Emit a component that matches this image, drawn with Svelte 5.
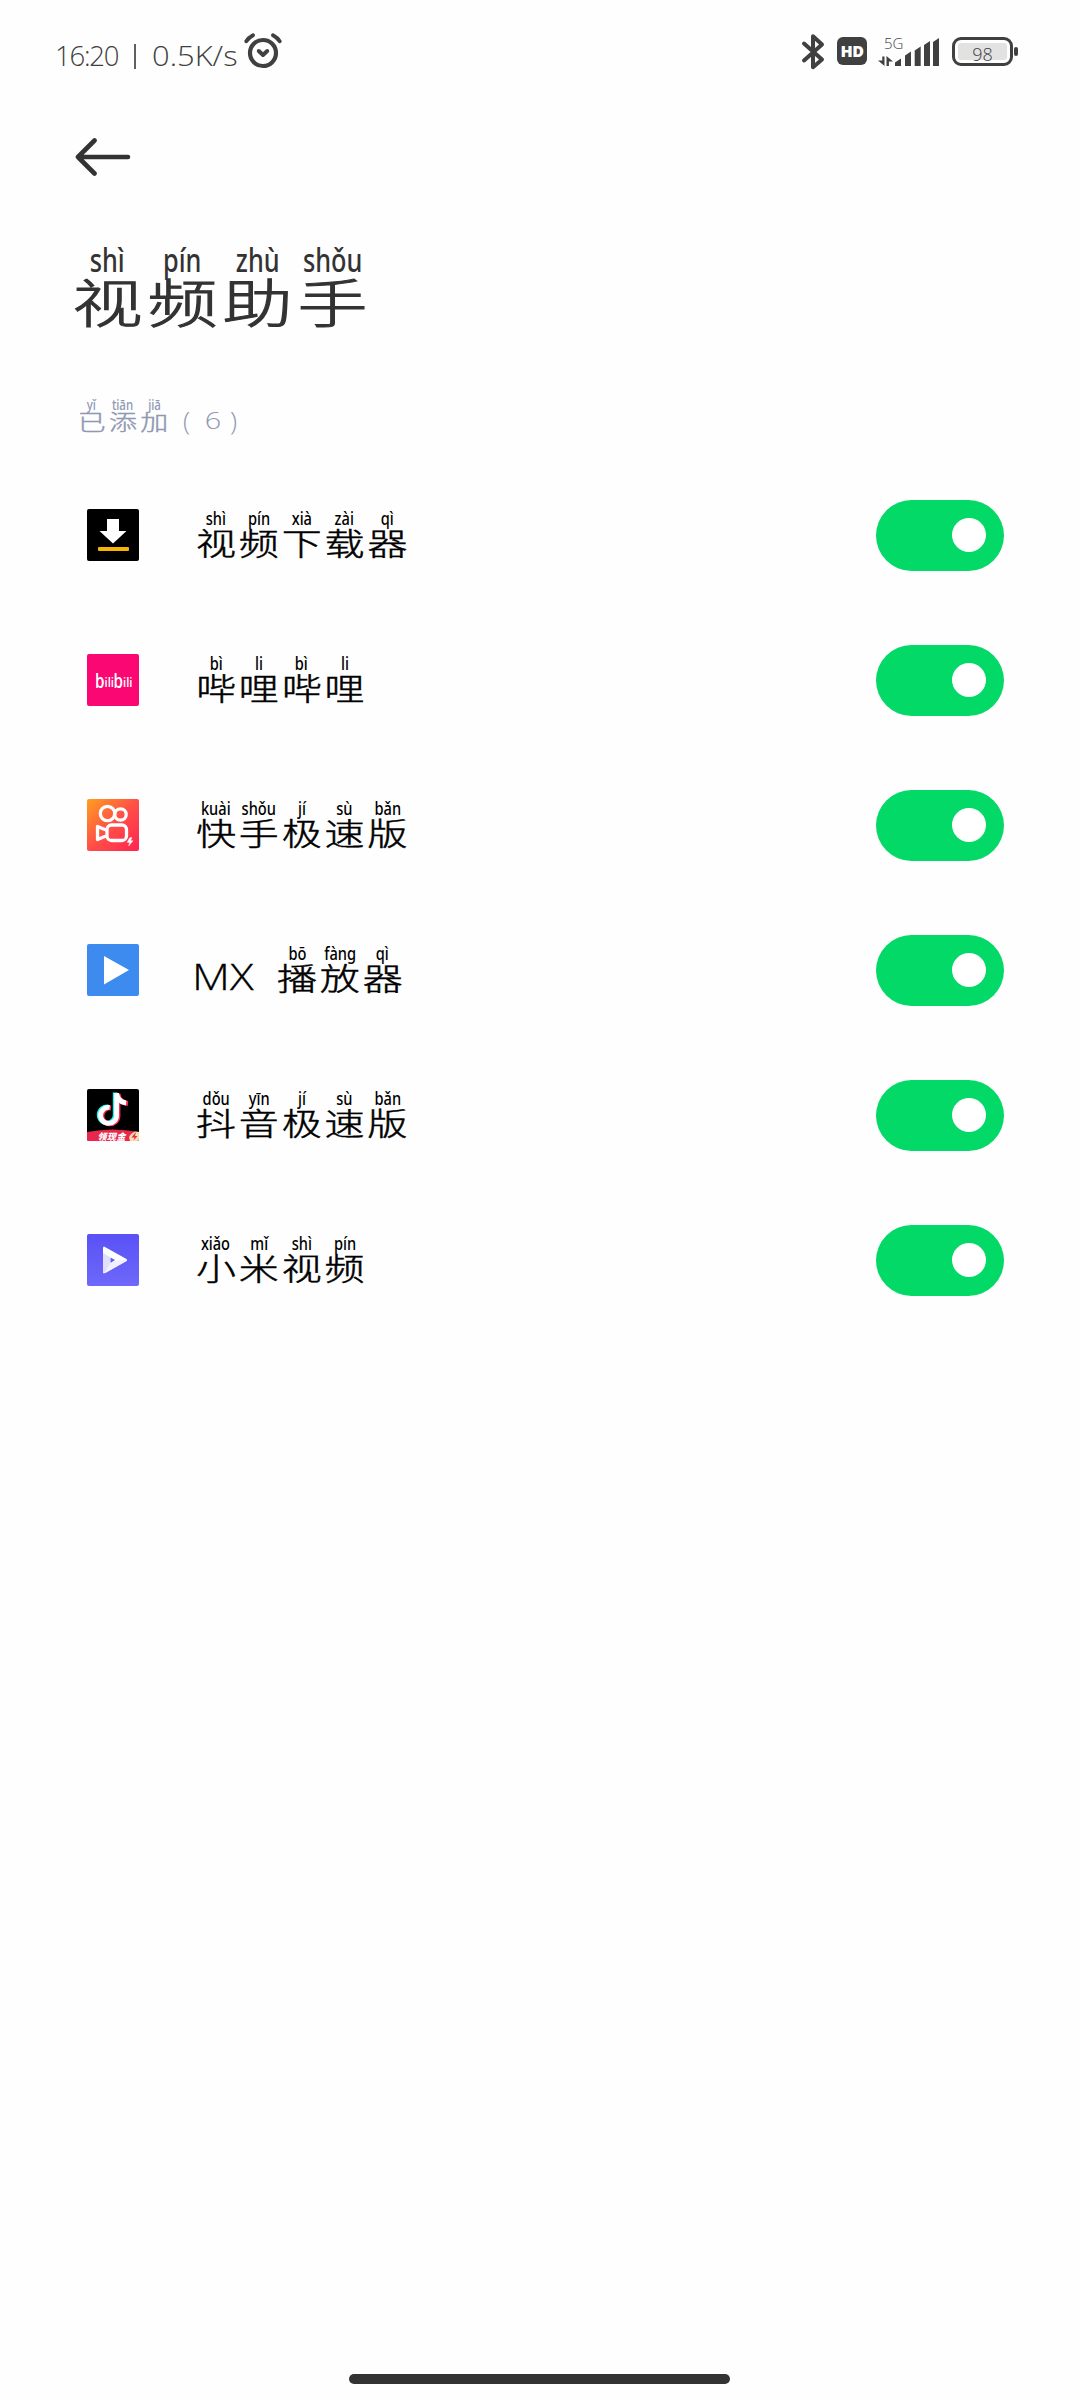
<script lang="ts">
  type Glyph = [string, string];

  const title: Glyph[] = [['视', 'shì'], ['频', 'pín'], ['助', 'zhù'], ['手', 'shǒu']];
  const added: Glyph[] = [['已', 'yǐ'], ['添', 'tiān'], ['加', 'jiā']];

  let apps = $state([
    { id: 'download', prefix: '', on: true, name: [['视', 'shì'], ['频', 'pín'], ['下', 'xià'], ['载', 'zài'], ['器', 'qì']] as Glyph[] },
    { id: 'bili', prefix: '', on: true, name: [['哔', 'bì'], ['哩', 'li'], ['哔', 'bì'], ['哩', 'li']] as Glyph[] },
    { id: 'kuaishou', prefix: '', on: true, name: [['快', 'kuài'], ['手', 'shǒu'], ['极', 'jí'], ['速', 'sù'], ['版', 'bǎn']] as Glyph[] },
    { id: 'mx', prefix: 'MX', on: true, name: [['播', 'bō'], ['放', 'fàng'], ['器', 'qì']] as Glyph[] },
    { id: 'douyin', prefix: '', on: true, name: [['抖', 'dǒu'], ['音', 'yīn'], ['极', 'jí'], ['速', 'sù'], ['版', 'bǎn']] as Glyph[] },
    { id: 'mivideo', prefix: '', on: true, name: [['小', 'xiǎo'], ['米', 'mǐ'], ['视', 'shì'], ['频', 'pín']] as Glyph[] }
  ]);
</script>

{#snippet pinyin(glyphs: Glyph[])}
  {#each glyphs as [hanzi, sound]}
    <span class="cell">
      <span class="sound">{sound}</span>
      <span class="hanzi">{hanzi}</span>
    </span>
  {/each}
{/snippet}

<div class="screen">
  <header class="status">
    <span class="clock">16:20</span>
    <span class="divider"></span>
    <span class="speed">0.5K/s</span>
    <svg class="alarm" width="38" height="36" viewBox="0 0 38 36" fill="none" stroke="#404040" stroke-linecap="round">
      <circle cx="19" cy="20" r="13" stroke-width="4.2" />
      <path d="M14.800 18l4.200 4 4.200-4" stroke-width="4" stroke-linejoin="round" />
      <path d="M2.300 8.300Q4.500 4.600 9 2.200M35.700 8.300Q33.500 4.600 29 2.200" stroke-width="3.8" />
    </svg>
    <span class="spacer"></span>
    <svg class="bluetooth" width="24" height="38" viewBox="0 0 24 38" fill="none" stroke="#404040" stroke-width="4" stroke-linecap="round" stroke-linejoin="round">
      <path d="M3 10.500L21 26.500 12 34.200V3.200L21 11.500 3 27.500" />
    </svg>
    <span class="hd">HD</span>
    <div class="signal">
      <span>5G</span>
      <svg width="62" height="30" viewBox="0 0 62 30" fill="#404040">
        <path d="M4.300 18.500h2.200V28L0 22.500h4.300zM8.500 28V18L15 23.500h-4.100V28z" />
        <path d="M17 28v-3.500l6-4V28zM27 28V17.500l6-4V28zM36.700 28V12.500l6-4V28zM46 28V7l6-4v25zM55 28V4l6-4v28z" />
      </svg>
    </div>
    <div class="battery"><span>98</span></div>
    <i class="nub"></i>
  </header>

  <button class="back" aria-label="back">
    <svg width="56" height="38" viewBox="0 0 56 38" fill="none" stroke="#333" stroke-width="4.6" stroke-linecap="round" stroke-linejoin="round">
      <path d="M19.500 2.500L3 19l16.500 16.500M3 19h50" />
    </svg>
  </button>

  <h1>{@render pinyin(title)}</h1>
  <h2>{@render pinyin(added)}<span class="paren">(</span><span class="count">6</span><span class="paren">)</span></h2>

  <ul>
    {#each apps as app}
      <li>
        <svg class="icon" width="52" height="52" viewBox="0 0 52 52">
          {#if app.id === 'download'}
            <rect width="52" height="52" fill="#000" />
            <path d="M20 10h12v12h7.500L26 34.500 12.500 22H20z" fill="#fff" />
            <rect x="11" y="38" width="31" height="4" rx="1" fill="#f7b500" />
          {:else if app.id === 'bili'}
            <rect width="52" height="52" fill="#fb0774" />
            <g class="bililogo">
              <text x="8" y="33.500" textLength="9.500" lengthAdjust="spacingAndGlyphs" class="big">b</text>
              <text x="17.500" y="32.500" textLength="9.500" lengthAdjust="spacingAndGlyphs">ili</text>
              <text x="26.500" y="33.500" textLength="9.500" lengthAdjust="spacingAndGlyphs" class="big">b</text>
              <text x="36" y="32.500" textLength="9.500" lengthAdjust="spacingAndGlyphs">ili</text>
            </g>
          {:else if app.id === 'kuaishou'}
            <defs>
              <linearGradient id="ks" x1="0" y1="0" x2="1" y2="1">
                <stop offset="0" stop-color="#ff9f1f" />
                <stop offset=".5" stop-color="#ff4f48" />
                <stop offset="1" stop-color="#ff2450" />
              </linearGradient>
            </defs>
            <rect width="52" height="52" fill="url(#ks)" />
            <g fill="none" stroke="#fff" stroke-width="3.300" stroke-linejoin="round">
              <circle cx="20.500" cy="14.500" r="7.200" />
              <circle cx="33.500" cy="15.500" r="5.700" />
              <rect x="20" y="26" width="19.500" height="15.500" rx="4.500" />
              <path d="M19 31l-8.500-3.500v13L19 37" />
            </g>
            <path d="M42.800 38.800l-2.500 4.500h2.500l-1 3.500 4-5h-2.500l1.500-3z" fill="#fff" stroke="#fff" stroke-width=".6" />
          {:else if app.id === 'mx'}
            <rect width="52" height="52" fill="#3d8bef" />
            <path d="M17 12l25 14-25 14.500z" fill="#fff" />
          {:else if app.id === 'douyin'}
            <rect width="52" height="52" fill="#000" />
            <g fill="none" stroke-width="4.800">
              <path d="M28.200 3.500V26a8 8 0 1 1-7-8M28.200 4c1 6 4 9 10 9.500" stroke="#25f4ee" />
              <path d="M31 4.500V27a8 8 0 1 1-7-8M31 5c1 6 4 9 10 9.500" stroke="#fe2c55" />
              <path d="M29.600 4V26.500a8 8 0 1 1-7-8M29.600 4.500c1 6 4 9 9.500 9.500" stroke="#fff" />
            </g>
            <path d="M0 43q26-5 52 0v9H0z" fill="#e8274b" />
            <path d="M43 52q-3-6 5-9.500l4 .5v9z" fill="#f9dcb0" />
            <path d="M49 43l-4.500 5.500h3l-1 3 4-4.500H48z" fill="#e8274b" />
            <text x="10.500" y="50.500" class="banner" textLength="28">领现金</text>
          {:else}
            <defs>
              <linearGradient id="mi" x1="0" y1="0" x2="0" y2="1">
                <stop offset="0" stop-color="#5951f5" />
                <stop offset="1" stop-color="#6e68fb" />
              </linearGradient>
            </defs>
            <rect width="52" height="52" fill="url(#mi)" />
            <path d="M17 12.500Q16 12.500 16 14v24q0 2 2 1L39.500 27q1-1 0-2z" fill="#fff" />
            <path d="M16 38V19l7 4v7.500l-6 9q-1-.3-1-1.500z" fill="#e0e0fc" />
            <path d="M23 30l5-3.500L40 26q0 .7-.5 1L18 39.200z" fill="#f0f0ff" />
            <path d="M23.500 23.500l4.500 2.500-4.500 3z" fill="#6159f8" />
          {/if}
        </svg>
        <span class="label">
          {#if app.prefix}<span class="latin"><span>{app.prefix}</span></span>{/if}
          {@render pinyin(app.name)}
        </span>
        <button class="toggle" class:on={app.on} aria-label="toggle" onclick={() => (app.on = !app.on)}><i></i></button>
      </li>
    {/each}
  </ul>

  <div class="home"></div>
</div>

<style>
:global(body) {
  background: #fefefe;
}

.screen {
  display: flex;
  flex-direction: column;
  box-sizing: border-box;
  width: 1080px;
  height: 2400px;
  overflow: hidden;
  color: #000;
  font-family: "Noto Sans", "Noto Sans CJK SC", sans-serif;
}

button {
  padding: 0;
  border: 0;
  background: none;
}

.status {
  display: flex;
  align-items: flex-start;
  height: 104px;
  box-sizing: border-box;
  padding: 33px 62px 0 55px;
  color: #404040;
  font-family: "Open Sans", sans-serif;
  font-weight: 300;
}

.clock, .speed {
  height: 40px;
  font-size: 27px;
  line-height: 45px;
  white-space: nowrap;
  transform-origin: left;
}

.clock {
  width: 80px;
  letter-spacing: -1.200px;
  transform: scaleX(1.020);
}

.divider {
  width: 2px;
  height: 25px;
  margin: 11px 16px 0 -1px;
  background: #606060;
}

.speed {
  width: 92px;
  transform: scaleX(1.145);
}

.spacer {
  flex: 1;
}

.hd {
  width: 30px;
  height: 28px;
  margin: 4px 11px 0 12px;
  border-radius: 6px;
  background: #404040;
  color: #fff;
  font: 800 16px/28px "Open Sans", sans-serif;
  letter-spacing: -.5px;
  text-align: center;
}

.signal {
  position: relative;
  width: 62px;
  height: 30px;
  margin: 5px 12px 0 0;
}

.signal span {
  position: absolute;
  left: 6px;
  top: -3px;
  font-size: 15px;
  line-height: 16px;
}

.signal svg {
  display: block;
}

.battery {
  box-sizing: border-box;
  width: 61px;
  height: 29px;
  margin-top: 4px;
  padding: 3px;
  border: 3px solid #404040;
  border-radius: 9px;
}

.battery span {
  display: block;
  height: 17px;
  border-radius: 3px;
  background: #e2e2e2;
  font-size: 18px;
  line-height: 22px;
  text-align: center;
}

.nub {
  width: 4px;
  height: 9px;
  margin: 14px 0 0 1px;
  border-radius: 2px;
  background: #404040;
}

.back {
  width: 56px;
  height: 38px;
  margin: 34px 0 0 75px;
}

.back svg {
  display: block;
}

.cell {
  display: flex;
  flex-direction: column;
  align-items: center;
  flex: none;
}

.sound {
  font-weight: 500;
  white-space: nowrap;
  transform: scaleX(.79);
}

.hanzi {
  font-family: "Noto Sans CJK SC", sans-serif;
  transform: scaleY(.78);
}

h1, h2, ul {
  margin: 0;
  padding: 0;
}

h1 {
  display: flex;
  height: 100px;
  margin: 63px 0 0 70px;
  color: #333;
  font-weight: 400;
}

h1 .cell {
  width: 75px;
}

h1 .sound {
  height: 25px;
  font-size: 32px;
  line-height: 42px;
}

h1 .hanzi {
  font-size: 70px;
  line-height: 72px;
  font-weight: 300;
  -webkit-text-stroke: 1.400px #333;
  transform: scaleY(.75);
}

h2 {
  display: flex;
  height: 42px;
  margin: 57px 0 0 76px;
  color: #8f97b3;
  font-weight: 400;
}

h2 .cell {
  width: 31.300px;
}

h2 .sound {
  height: 11px;
  font-size: 13.500px;
  line-height: 18px;
  transform: scaleX(.85);
}

h2 .hanzi {
  font-size: 28px;
  line-height: 29px;
  font-weight: 300;
  -webkit-text-stroke: .5px #8f97b3;
  transform: scaleY(.76);
}

.paren, .count {
  font: 300 24px/28px "Open Sans", sans-serif;
  margin-top: 10px;
}

.paren {
  width: 12px;
  margin-left: 13px;
  font-size: 26px;
}

.count {
  width: 20px;
  margin-left: 8px;
  text-align: center;
  transform: scaleX(1.200);
}

.count + .paren {
  margin-left: 7px;
}

ul {
  display: flex;
  flex-direction: column;
  margin-top: 24.500px;
  list-style: none;
}

li {
  display: flex;
  align-items: center;
  height: 145px;
  box-sizing: border-box;
  padding: 0 76px 0 87px;
}

.icon {
  flex: none;
  margin-right: 55.500px;
  border-radius: 2px;
}

.bililogo {
  fill: #fff;
  font: 600 13px "Open Sans", sans-serif;
}

.bililogo .big {
  font-size: 19px;
}

.banner {
  fill: #fff;
  font: italic 900 9px "Noto Sans CJK SC", sans-serif;
}

.label {
  display: flex;
  flex: 1;
  height: 60px;
}

.label .cell {
  width: 42.900px;
}

.label .sound {
  height: 17px;
  font-size: 18.500px;
  line-height: 26px;
}

.label .hanzi {
  font-size: 40px;
  line-height: 40px;
  font-weight: 300;
  -webkit-text-stroke: .6px #000;
}

.latin {
  width: 81px;
  margin-top: 17px;
}

.latin span {
  display: inline-block;
  margin-left: -3px;
  font: 300 36px/40px "Open Sans", sans-serif;
  -webkit-text-stroke: .3px #000;
  transform: scaleX(1.220);
  transform-origin: left;
}

.toggle {
  display: flex;
  align-items: center;
  width: 128px;
  height: 71px;
  padding: 0 18px;
  border-radius: 36px;
  background: #d8d8d8;
}

.toggle i {
  width: 34px;
  height: 34px;
  border-radius: 50%;
  background: #fff;
}

.toggle.on {
  justify-content: flex-end;
  background: #03d967;
}

.home {
  width: 381px;
  height: 10px;
  margin: auto auto 16px 349px;
  border-radius: 5px;
  background: #333;
}
</style>
